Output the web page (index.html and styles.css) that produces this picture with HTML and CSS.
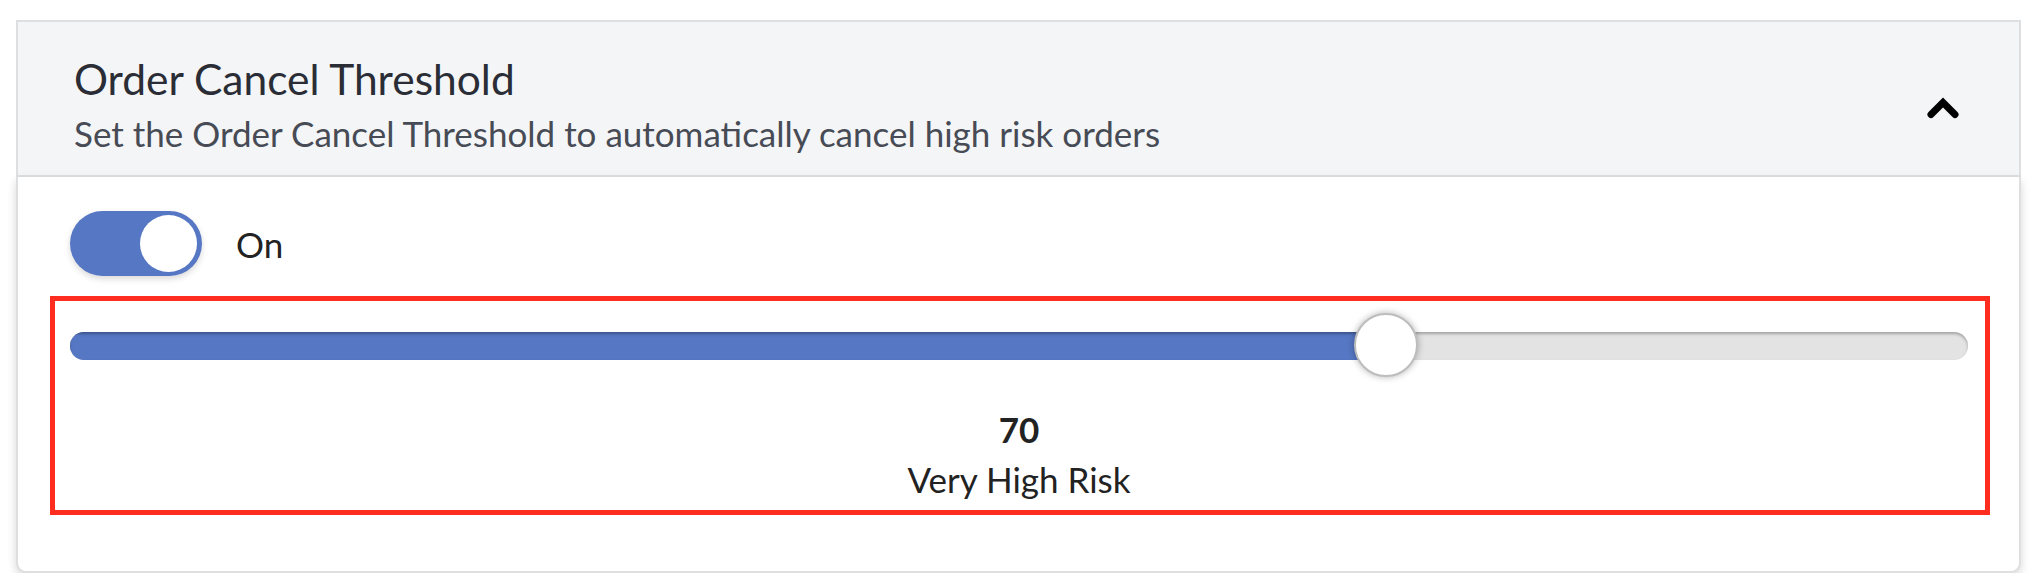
FILE: index.html
```html
<!DOCTYPE html>
<html lang="en">
<head>
  <meta charset="UTF-8" />
  <title>Order Cancel Threshold</title>
  <link rel="stylesheet" href="styles.css">
</head>
<body>
  <div class="card">
    <div class="card-header">
      <div class="header-text">
        <h2>Order Cancel Threshold</h2>
        <p>Set the Order Cancel Threshold to automatically cancel high risk orders</p>
      </div>
      <svg class="chevron" width="34" height="22" viewBox="0 0 34 22">
        <polyline points="5,17.5 17,5.5 29,17.5" fill="none" stroke="#000" stroke-width="7" stroke-linecap="round" stroke-linejoin="miter" />
      </svg>
    </div>

    <div class="card-body">
      <div class="toggle-row">
        <div class="toggle on"><span class="knob"></span></div>
        <span class="toggle-label">On</span>
      </div>

      <div class="threshold">
        <div class="slider" style="--v: 0.7">
          <div class="track"><div class="fill"></div></div>
          <div class="thumb"></div>
        </div>
        <div class="value">70</div>
        <div class="risk">Very High Risk</div>
      </div>
    </div>
  </div>
</body>
</html>
```

FILE: styles.css
```css
* {
  box-sizing: border-box;
}
body {
  margin: 0;
  background: #fff;
  font-family: Lato, 'Open Sans', sans-serif;
}
.card {
  margin: 20px 23px 0 16px;
}
.card-header {
  display: flex;
  justify-content: space-between;
  background: #f4f5f7;
  border: 2px solid #dedfe1;
  padding: 32px 59px 21px 56px;
}
.card-header h2 {
  margin: 0;
  font-size: 42.5px;
  line-height: 50px;
  font-weight: 400;
  color: #2a2d35;
}
.card-header p {
  margin: 8px 0 0;
  font-size: 35px;
  line-height: 42px;
  color: #474b55;
}
.chevron {
  margin-top: 43px;
  flex-shrink: 0;
}
.card-body {
  background: #fff;
  border: 2px solid #dedfe1;
  border-top: none;
  border-radius: 0 0 10px 10px;
  padding: 34px 29px 56px 32px;
  box-shadow: 0 4px 10px rgba(0, 0, 0, 0.16);
}
.toggle-row {
  display: flex;
  align-items: center;
  margin-left: 20px;
}
.toggle {
  width: 132px;
  height: 65px;
  border-radius: 33px;
  background: #5677c4;
  padding: 4px 5px;
  display: flex;
  justify-content: flex-end;
  box-shadow: 0 3px 6px rgba(0, 0, 0, 0.15);
}
.knob {
  width: 57px;
  height: 57px;
  border-radius: 50%;
  background: #fff;
}
.toggle-label {
  margin-left: 34px;
  font-size: 35px;
  color: #222;
}
.threshold {
  margin-top: 20px;
  border: 5px solid #ff2d20;
  padding: 12px 17px 10px 15px;
  text-align: center;
}
.slider {
  position: relative;
  height: 65px;
  display: flex;
  align-items: center;
}
.track {
  width: 100%;
  height: 28px;
  border-radius: 14px;
  background: #e3e3e3;
  box-shadow: inset 0 2px 3px rgba(0, 0, 0, 0.28);
  overflow: hidden;
}
.fill {
  width: calc(32px + (100% - 64px) * var(--v));
  height: 100%;
  background: #5677c4;
  box-shadow: inset 0 2px 3px rgba(0, 0, 0, 0.3);
}
.thumb {
  position: absolute;
  top: 0;
  left: calc((100% - 64px) * var(--v));
  width: 64px;
  height: 64px;
  border-radius: 50%;
  background: #fff;
  border: 2px solid #bdbdbd;
  box-shadow: 0 0 7px rgba(0, 0, 0, 0.3);
}
.value {
  margin-top: 30px;
  font-size: 35px;
  line-height: 42px;
  font-weight: 700;
  color: #222;
}
.risk {
  margin-top: 8px;
  font-size: 35px;
  line-height: 42px;
  color: #222;
}
```
